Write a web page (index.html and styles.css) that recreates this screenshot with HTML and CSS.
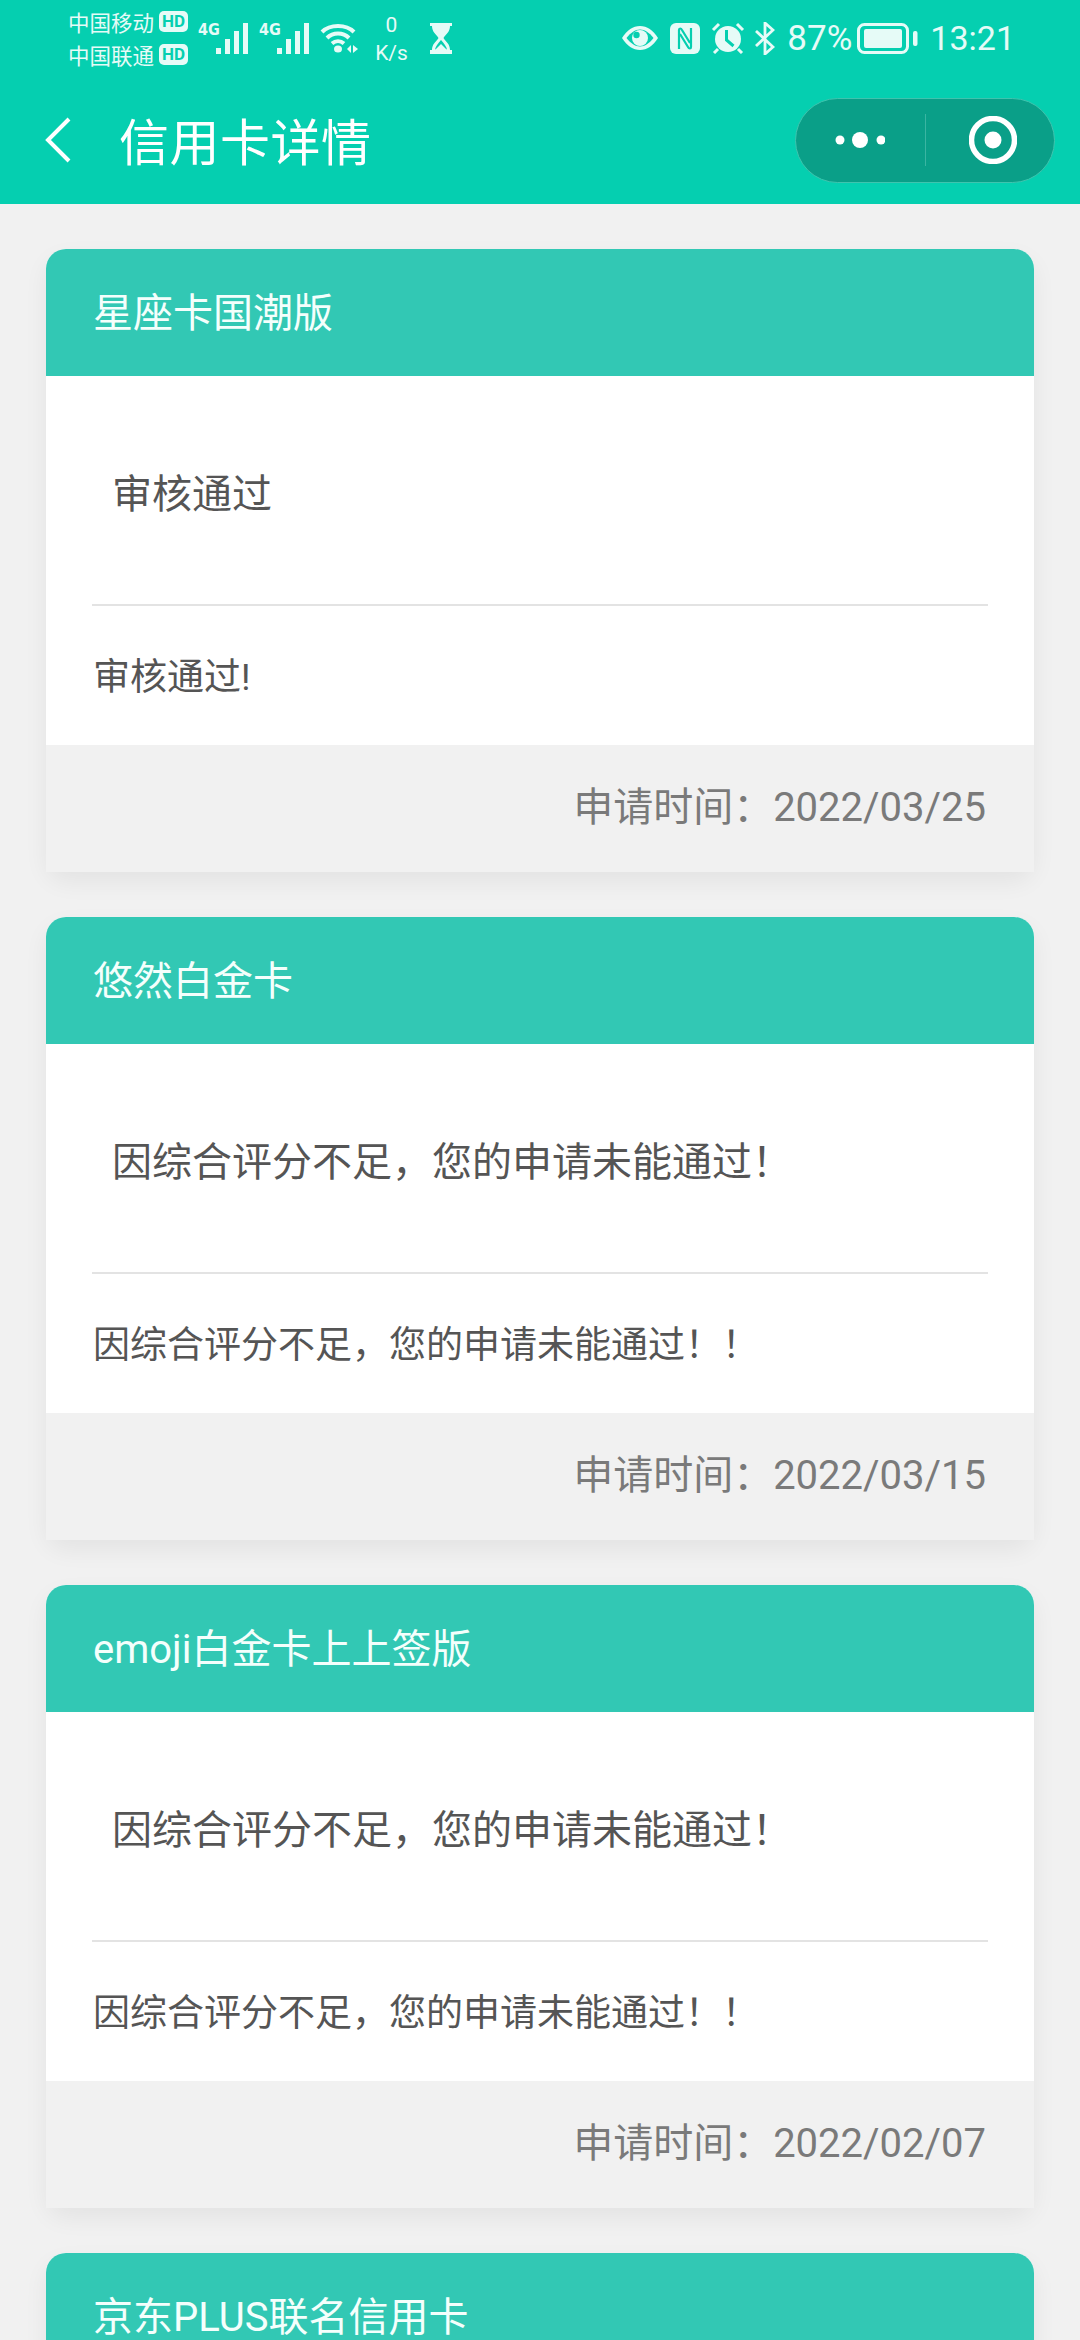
FILE: index.html
```html
<!DOCTYPE html>
<html lang="zh-CN">
<head>
    <meta charset="UTF-8">
    <title>信用卡详情</title>
    <meta name="viewport" content="width=device-width, user-scalable=no, initial-scale=1.0" />
    <link rel="stylesheet" href="styles.css">
</head>
<body>
<div class="top">
    <div class="status">
        <div class="status-left">
            <div class="carriers">
                <div class="carrier">中国移动<span class="hd">HD</span></div>
                <div class="carrier">中国联通<span class="hd">HD</span></div>
            </div>
            <div class="net">
                <span class="net-type">4G</span>
                <svg class="signal" viewBox="0 0 32 31"><path d="M0 25h5v6H0zM9 16h5v15H9zM18 8h5v23h-5zM27 0h5v31h-5z" fill="#e6fbf7"/></svg>
            </div>
            <div class="net">
                <span class="net-type">4G</span>
                <svg class="signal" viewBox="0 0 32 31"><path d="M0 25h5v6H0zM9 16h5v15H9zM18 8h5v23h-5zM27 0h5v31h-5z" fill="#e6fbf7"/></svg>
            </div>
            <svg class="wifi" viewBox="0 0 38 31">
                <path d="M2 9C10 1 26 1 34 9M7 15C13 9 23 9 29 15M12 20.500C15.500 17.500 20.500 17.500 24 20.500" fill="none" stroke="#e6fbf7" stroke-width="4"/>
                <ellipse cx="18" cy="26" rx="4" ry="3.500" fill="#e6fbf7"/>
                <path d="M31 22v8l-4-4zM33 22v8l5-4z" fill="#e6fbf7"/>
            </svg>
            <div class="speed"><div>0</div><div>K/s</div></div>
            <svg class="hourglass" viewBox="0 0 24 31">
                <path d="M1 0h22v3h-2c0 6-4 8-6.500 12 2.500 4 6.500 6 6.500 12h2v4H1v-4h2c0-6 4-8 6.500-12C7 11 3 9 3 3H1z" fill="#e6fbf7"/>
                <path d="M6 26.500c.5-3 3-6 6-9.500 3 3.500 5.500 6.500 6 9.500z" fill="#05cfb0"/>
                <path d="M12 21l6 6H6z" fill="#e6fbf7"/>
            </svg>
        </div>
        <div class="status-right">
            <svg class="eye" viewBox="0 0 38 26">
                <path d="M1 13C6 5 12 1 19 1S32 5 37 13C32 21 26 25 19 25S6 21 1 13z" fill="#e6fbf7"/>
                <path d="M5.500 13C10 7.500 14 4.500 19 4.500S28 7.500 32.500 13C28 18.500 24 21.500 19 21.500S10 18.500 5.500 13z" fill="#05cfb0"/>
                <circle cx="19" cy="13" r="8" fill="#e6fbf7"/>
                <circle cx="15.500" cy="10" r="3.200" fill="#05cfb0"/>
            </svg>
            <svg class="nfc" viewBox="0 0 30 31">
                <rect x="0" y="0" width="30" height="31" rx="6" fill="#e6fbf7"/>
                <path d="M9 26V7c0-2 2-2 3 0l8 13M21 5v19c0 2-2 2-3 0l-8-13" fill="none" stroke="#05cfb0" stroke-width="2.200"/>
            </svg>
            <svg class="alarm" viewBox="0 0 34 32">
                <circle cx="17" cy="17" r="13" fill="#e6fbf7"/>
                <path d="M15.500 8v10l7 6" fill="none" stroke="#05cfb0" stroke-width="3"/>
                <path d="M2 8L8 2M32 8L26 2M7 27l-4 4M27 27l4 4" fill="none" stroke="#e6fbf7" stroke-width="3"/>
            </svg>
            <svg class="bt" viewBox="0 0 20 33">
                <path d="M1 9l17 16-8 7V1l8 7L1 24" fill="none" stroke="#e6fbf7" stroke-width="2.800"/>
            </svg>
            <span class="percent">87%</span>
            <svg class="battery" viewBox="0 0 61 31">
                <rect x="1.500" y="1.500" width="49" height="28" rx="6" fill="none" stroke="#e6fbf7" stroke-width="3"/>
                <rect x="7" y="6" width="38" height="19" rx="2" fill="#e6fbf7"/>
                <rect x="56" y="8" width="4.500" height="15" rx="2" fill="#e6fbf7"/>
            </svg>
            <span class="clock">13:21</span>
        </div>
    </div>
    <div class="nav">
        <svg class="back" viewBox="0 0 26 46"><path d="M24 2L3 23l21 21" fill="none" stroke="#fff" stroke-width="4"/></svg>
        <div class="nav-title">信用卡详情</div>
        <div class="capsule">
            <svg class="more" viewBox="0 0 50 16">
                <circle cx="5" cy="8" r="4.500" fill="#fff"/>
                <circle cx="25" cy="8" r="8" fill="#fff"/>
                <circle cx="46" cy="8" r="4.500" fill="#fff"/>
            </svg>
            <div class="capsule-line"></div>
            <svg class="target" viewBox="0 0 48 48">
                <circle cx="24" cy="24" r="21.500" fill="none" stroke="#fff" stroke-width="5.500"/>
                <circle cx="24" cy="24" r="8.500" fill="#fff"/>
            </svg>
        </div>
    </div>
</div>
<div class="list">
    <div class="card">
        <div class="card-title">星座卡国潮版</div>
        <div class="card-status">审核通过</div>
        <div class="card-msg">审核通过!</div>
        <div class="card-time">申请时间：2022/03/25</div>
    </div>
    <div class="card">
        <div class="card-title">悠然白金卡</div>
        <div class="card-status">因综合评分不足，您的申请未能通过！</div>
        <div class="card-msg">因综合评分不足，您的申请未能通过！！</div>
        <div class="card-time">申请时间：2022/03/15</div>
    </div>
    <div class="card">
        <div class="card-title">emoji白金卡上上签版</div>
        <div class="card-status">因综合评分不足，您的申请未能通过！</div>
        <div class="card-msg">因综合评分不足，您的申请未能通过！！</div>
        <div class="card-time">申请时间：2022/02/07</div>
    </div>
    <div class="card">
        <div class="card-title">京东PLUS联名信用卡</div>
    </div>
</div>
</body>
</html>
```

FILE: styles.css
```css
*{
    box-sizing: border-box;
}
html,body{
    height: 2340px;
    overflow: hidden;
}
body{
    margin: 0;
    background-color: #f1f1f1;
    font-family: Roboto, "Noto Sans CJK SC", sans-serif;
}

/* top bar */
.top{
    height: 204px;
    background-color: #05cfb0;
}
.status{
    display: flex;
    justify-content: space-between;
    height: 76px;
    padding: 0 65px 0 68px;
    color: #e6fbf7;
}
.status-left,.status-right{
    display: flex;
    align-items: center;
}
.carriers{
    width: 120px;
    margin-right: 10px;
}
.carrier{
    display: flex;
    align-items: center;
    justify-content: space-between;
    height: 33px;
    font-size: 21.500px;
}
.hd{
    width: 29px;
    height: 21px;
    border-radius: 5px;
    background-color: #e6fbf7;
    color: #05cfb0;
    font-size: 17px;
    font-weight: 700;
    line-height: 21px;
    text-align: center;
}
.net{
    display: flex;
    align-items: flex-end;
    height: 31px;
    margin-right: 11px;
}
.net-type{
    align-self: flex-start;
    width: 18px;
    font-family: "DejaVu Sans Condensed", "DejaVu Sans", sans-serif;
    font-size: 16px;
    font-weight: 700;
    line-height: 14px;
}
.signal{
    width: 32px;
    height: 31px;
}
.wifi{
    width: 38px;
    height: 31px;
    margin-right: 17px;
}
.speed{
    width: 33px;
    margin-top: 2px;
    font-size: 21px;
    line-height: 28px;
    text-align: center;
}
.hourglass{
    width: 24px;
    height: 31px;
    margin-left: 21px;
}
.eye{
    width: 38px;
    height: 26px;
    margin-right: 11px;
}
.nfc{
    width: 30px;
    height: 31px;
    margin-right: 11px;
}
.alarm{
    width: 34px;
    height: 32px;
    margin-right: 10px;
}
.bt{
    width: 20px;
    height: 33px;
    margin-right: 12px;
}
.percent{
    font-size: 35px;
}
.battery{
    width: 61px;
    height: 31px;
    margin: 0 12px 0 5px;
}
.clock{
    font-size: 34px;
}

/* title row */
.nav{
    display: flex;
    align-items: center;
    height: 128px;
    padding: 0 25px 0 45px;
    color: #fff;
}
.back{
    width: 26px;
    height: 46px;
    margin-right: 48px;
}
.nav-title{
    flex: 1;
    margin-bottom: 2px;
    font-size: 50px;
    letter-spacing: 0.500px;
}
.capsule{
    display: flex;
    align-items: center;
    width: 260px;
    height: 85px;
    border: 1px solid #3fc4ae;
    border-radius: 43px;
    background-color: #0a9f88;
}
.more{
    width: 50px;
    height: 16px;
    margin-left: 39px;
}
.capsule-line{
    width: 1px;
    height: 52px;
    margin-left: 40px;
    background-color: #3bb5a2;
}
.target{
    width: 48px;
    height: 48px;
    margin-left: 43px;
}

/* cards */
.list{
    display: flex;
    flex-direction: column;
    gap: 45px;
    padding: 45px 46px 0 46px;
}
.card{
    flex-shrink: 0;
    border-radius: 20px;
    background-color: #fff;
    box-shadow: 0 10px 24px rgba(0,0,0,0.06);
}
.card-title{
    height: 127px;
    padding: 0 47px;
    border-radius: 20px 20px 0 0;
    background-color: #32c8b4;
    color: #f4fffc;
    font-size: 40px;
    line-height: 129px;
}
.card-status{
    height: 230px;
    margin: 0 46px;
    padding: 0 20px;
    border-bottom: 2px solid #e3e3e3;
    color: #555;
    font-size: 40px;
    line-height: 238px;
}
.card-msg{
    height: 139px;
    padding: 0 47px;
    color: #555;
    font-size: 37px;
    line-height: 143px;
}
.card-time{
    height: 127px;
    padding: 0 48px;
    background-color: #f1f1f1;
    color: #7a7a7a;
    font-size: 40px;
    line-height: 126px;
    text-align: right;
}
```
